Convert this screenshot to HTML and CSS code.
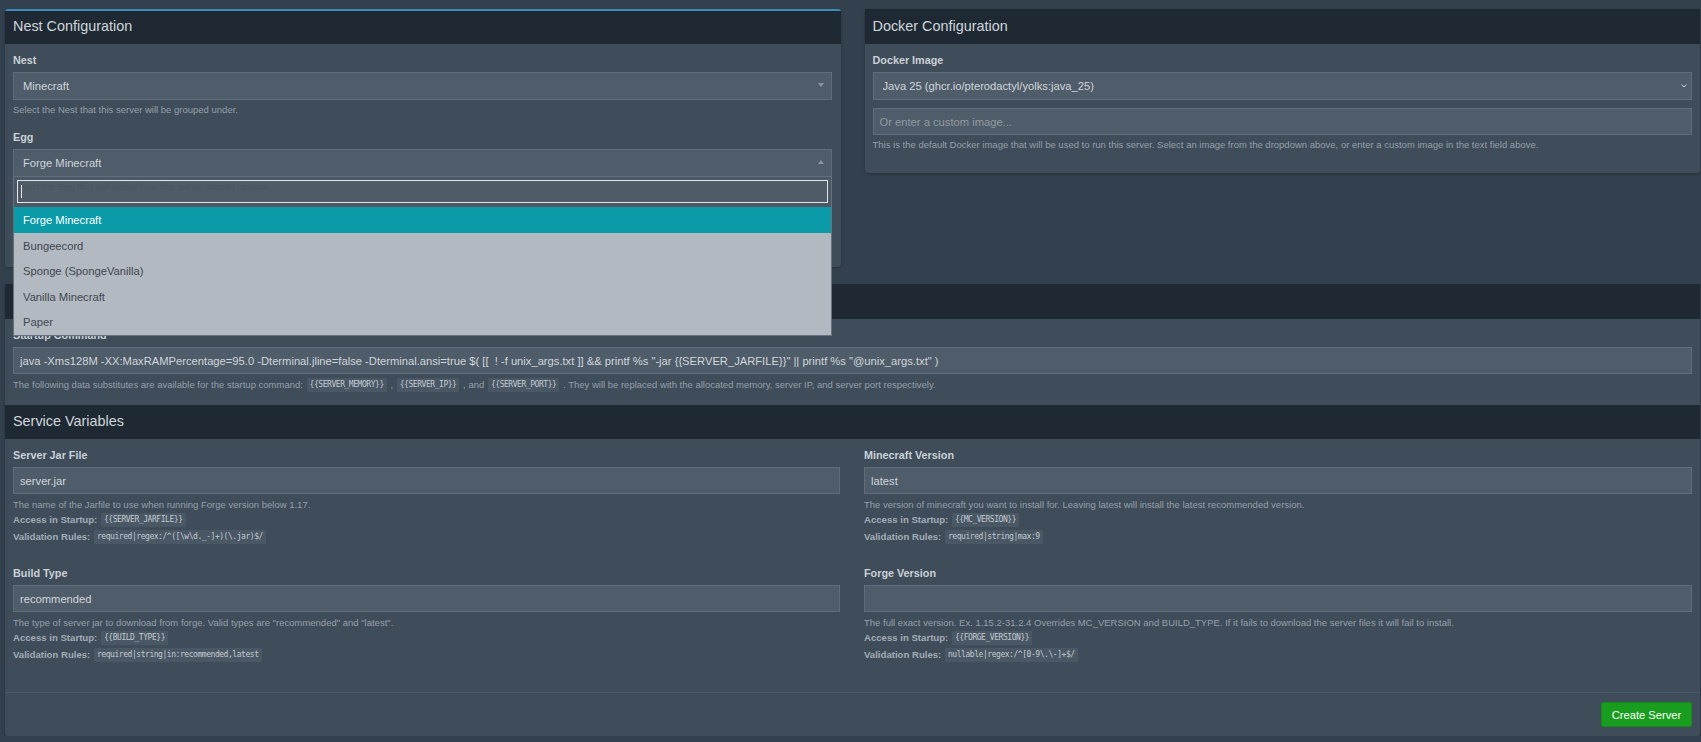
FILE: index.html
```html
<!DOCTYPE html>
<html lang="en">
<head>
    <meta charset="UTF-8">
    <meta name="viewport" content="width=device-width, initial-scale=1.0">
    <title>New Server</title>
    <link rel="stylesheet" href="styles.css">
</head>
<body>
    <div class="top-row">
        <div class="box box-primary box-nest">
            <div class="box-header"><h3 class="box-title">Nest Configuration</h3></div>
            <div class="box-body">
                <div class="form-group">
                    <label class="control-label">Nest</label>
                    <div class="select2 arrow-down">Minecraft</div>
                    <p class="help-block">Select the Nest that this server will be grouped under.</p>
                </div>
                <div class="form-group">
                    <label class="control-label">Egg</label>
                    <div class="select-wrap">
                        <div class="select2 arrow-up">Forge Minecraft</div>
                        <div class="dropdown">
                            <div class="dropdown-search">
                                <div class="search-field"></div>
                            </div>
                            <ul class="dropdown-list">
                                <li class="option option-active">Forge Minecraft</li>
                                <li class="option">Bungeecord</li>
                                <li class="option">Sponge (SpongeVanilla)</li>
                                <li class="option">Vanilla Minecraft</li>
                                <li class="option">Paper</li>
                            </ul>
                        </div>
                    </div>
                    <p class="help-block help-covered">Select the Egg that will define how this server should operate.</p>
                </div>
            </div>
        </div>

        <div class="box box-docker">
            <div class="box-header"><h3 class="box-title">Docker Configuration</h3></div>
            <div class="box-body">
                <label class="control-label">Docker Image</label>
                <div class="native-wrap">
                    <select class="form-control native-select">
                        <option>Java 25 (ghcr.io/pterodactyl/yolks:java_25)</option>
                    </select>
                    <svg class="chevron" width="6" height="4" viewBox="0 0 6 4"><path d="M0.5 0.5 L3 3 L5.5 0.5" fill="none" stroke="#cfd6dc" stroke-width="1"/></svg>
                </div>
                <input class="form-control custom-image" type="text" placeholder="Or enter a custom image...">
                <p class="help-block">This is the default Docker image that will be used to run this server. Select an image from the dropdown above, or enter a custom image in the text field above.</p>
            </div>
        </div>
    </div>

    <div class="box box-startup">
        <div class="box-header"></div>
        <div class="box-body startup-body">
            <label class="control-label">Startup Command</label>
            <input class="form-control" type="text" value='java -Xms128M -XX:MaxRAMPercentage=95.0 -Dterminal.jline=false -Dterminal.ansi=true $( [[  ! -f unix_args.txt ]] &amp;&amp; printf %s "-jar {{SERVER_JARFILE}}" || printf %s "@unix_args.txt" )'>
            <p class="help-block">The following data substitutes are available for the startup command: <code>{{SERVER_MEMORY}}</code> , <code>{{SERVER_IP}}</code> , and <code>{{SERVER_PORT}}</code> . They will be replaced with the allocated memory, server IP, and server port respectively.</p>
        </div>

        <div class="box-header"><h3 class="box-title">Service Variables</h3></div>
        <div class="box-body variables">
            <div class="variable">
                <label class="control-label">Server Jar File</label>
                <input class="form-control" type="text" value="server.jar">
                <p class="help-block">The name of the Jarfile to use when running Forge version below 1.17.</p>
                <p class="meta"><strong>Access in Startup:</strong> <code>{{SERVER_JARFILE}}</code></p>
                <p class="meta"><strong>Validation Rules:</strong> <code>required|regex:/^([\w\d._-]+)(\.jar)$/</code></p>
            </div>
            <div class="variable">
                <label class="control-label">Minecraft Version</label>
                <input class="form-control" type="text" value="latest">
                <p class="help-block">The version of minecraft you want to install for. Leaving latest will install the latest recommended version.</p>
                <p class="meta"><strong>Access in Startup:</strong> <code>{{MC_VERSION}}</code></p>
                <p class="meta"><strong>Validation Rules:</strong> <code>required|string|max:9</code></p>
            </div>
            <div class="variable">
                <label class="control-label">Build Type</label>
                <input class="form-control" type="text" value="recommended">
                <p class="help-block">The type of server jar to download from forge. Valid types are "recommended" and "latest".</p>
                <p class="meta"><strong>Access in Startup:</strong> <code>{{BUILD_TYPE}}</code></p>
                <p class="meta"><strong>Validation Rules:</strong> <code>required|string|in:recommended,latest</code></p>
            </div>
            <div class="variable">
                <label class="control-label">Forge Version</label>
                <input class="form-control" type="text">
                <p class="help-block">The full exact version. Ex. 1.15.2-31.2.4 Overrides MC_VERSION and BUILD_TYPE. If it fails to download the server files it will fail to install.</p>
                <p class="meta"><strong>Access in Startup:</strong> <code>{{FORGE_VERSION}}</code></p>
                <p class="meta"><strong>Validation Rules:</strong> <code>nullable|regex:/^[0-9\.\-]+$/</code></p>
            </div>
        </div>

        <div class="box-footer">
            <button class="btn-create" type="button">Create Server</button>
        </div>
    </div>
</body>
</html>
```

FILE: styles.css
```css
* {
    box-sizing: border-box;
}

body {
    margin: 0;
    padding: 9px 1px 0 5px;
    background-color: #33404d;
    font-family: 'Liberation Sans', Arial, sans-serif;
    font-size: 11.2px;
    color: #cad1d8;
    overflow: hidden;
}

.top-row {
    display: grid;
    grid-template-columns: 1fr 1fr;
    column-gap: 24px;
    align-items: start;
    margin-bottom: 17px;
}

.box {
    background-color: #3f4c59;
    border-radius: 3px;
    box-shadow: 0 1px 3px rgba(0, 0, 0, 0.25);
}

.box-primary {
    border-top: 2px solid #3c8dbc;
}

.box-nest {
    height: 258px;
}

.box-docker {
    height: 164px;
}

.box-docker .box-header {
    height: 35px;
}

.box-startup .box-header:first-child {
    height: 35px;
}

.box-header {
    height: 34px;
    display: flex;
    align-items: center;
    padding: 0 8px 2px;
    background-color: #1f2933;
}

.box-nest .box-header {
    height: 33px;
    padding-bottom: 3px;
}

.box-nest .box-body {
    padding-right: 9px;
}

.box-title {
    margin: 0;
    font-size: 14.4px;
    font-weight: normal;
    color: #cfd6dc;
}

.box-body {
    padding: 8px 8px 0;
}

.form-group {
    margin-bottom: 12px;
}

.control-label {
    display: block;
    height: 16px;
    line-height: 16px;
    margin-bottom: 4px;
    font-weight: bold;
    font-size: 10.8px;
    color: #cad1d8;
}

.select2,
.form-control {
    display: block;
    width: 100%;
    background-color: #4f5c69;
    border: 1px solid #5f6e7b;
    color: #cfd6dc;
    font-family: inherit;
    font-size: 11.2px;
    outline: none;
}

.select2 {
    position: relative;
    height: 28px;
    line-height: 26px;
    padding: 0 9px;
}

.select2::after {
    content: "";
    position: absolute;
    right: 7px;
    border-left: 3px solid transparent;
    border-right: 3px solid transparent;
}

.arrow-down::after {
    top: 10px;
    border-top: 4px solid #8b949c;
}

.arrow-up::after {
    top: 10px;
    border-bottom: 4px solid #8b949c;
}

.select-wrap {
    position: relative;
    z-index: 10;
}

.dropdown {
    position: absolute;
    top: 100%;
    left: 0;
    right: 0;
    border: 1px solid #66737f;
    border-top: 0;
}

.dropdown-search {
    padding: 3px 3px 4px;
    background-color: rgba(255, 255, 255, 0.07);
}

.search-field {
    position: relative;
    height: 23px;
    border: 1px solid #e3e7ea;
    background-color: rgba(255, 255, 255, 0.02);
}

.search-field::before {
    content: "";
    position: absolute;
    top: 4px;
    left: 3px;
    width: 1px;
    height: 13px;
    background-color: #e3e7ea;
}

.dropdown-list {
    list-style: none;
    margin: 0;
    padding: 0;
    background-color: #b2b9c0;
}

.option {
    height: 25.6px;
    line-height: 25px;
    padding: 1px 9px 0;
    font-size: 11.2px;
    color: #3e4750;
}

.option-active {
    background-color: #0a9aa8;
    color: #fff;
}

.help-block {
    margin: 3px 0 0;
    line-height: 14px;
    font-size: 9.5px;
    color: #95a0ab;
}

.help-covered {
    color: #3a4652;
}

.native-wrap {
    position: relative;
}

.native-select {
    height: 28px;
    padding: 0 9px;
    appearance: none;
}

.chevron {
    position: absolute;
    top: 12px;
    right: 5px;
}

.custom-image {
    margin-top: 8px;
}

.form-control[type="text"] {
    height: 27px;
    padding: 0 6px;
}

.form-control::placeholder {
    color: #929ba3;
}

.startup-body {
    height: 86px;
}

.variables {
    display: grid;
    grid-template-columns: 827px 1fr;
    column-gap: 24px;
    grid-auto-rows: 118px;
    height: 253px;
}

.variable .help-block {
    margin-top: 4px;
}

.meta {
    margin: 0;
    height: 17px;
    line-height: 16px;
    font-size: 9.6px;
    color: #95a0ab;
}

.meta strong {
    color: #a3adb7;
}

code {
    display: inline-block;
    height: 16px;
    line-height: 14px;
    padding: 0 3px;
    background-color: #4a5764;
    border: 1px solid #3f4c59;
    border-radius: 2px;
    font-family: 'DejaVu Sans Mono', monospace;
    font-size: 8px;
    letter-spacing: -0.45px;
    color: #c3cbd2;
    vertical-align: middle;
}

.box-footer {
    display: flex;
    justify-content: flex-end;
    padding: 9px 8px;
    border-top: 1px solid #4e5b68;
}

.btn-create {
    height: 25px;
    width: 91px;
    padding: 0;
    background-color: #189d1e;
    border: 1px solid #168a1b;
    border-radius: 2px;
    font-family: inherit;
    font-size: 11.2px;
    color: #fff;
    cursor: pointer;
}
```
